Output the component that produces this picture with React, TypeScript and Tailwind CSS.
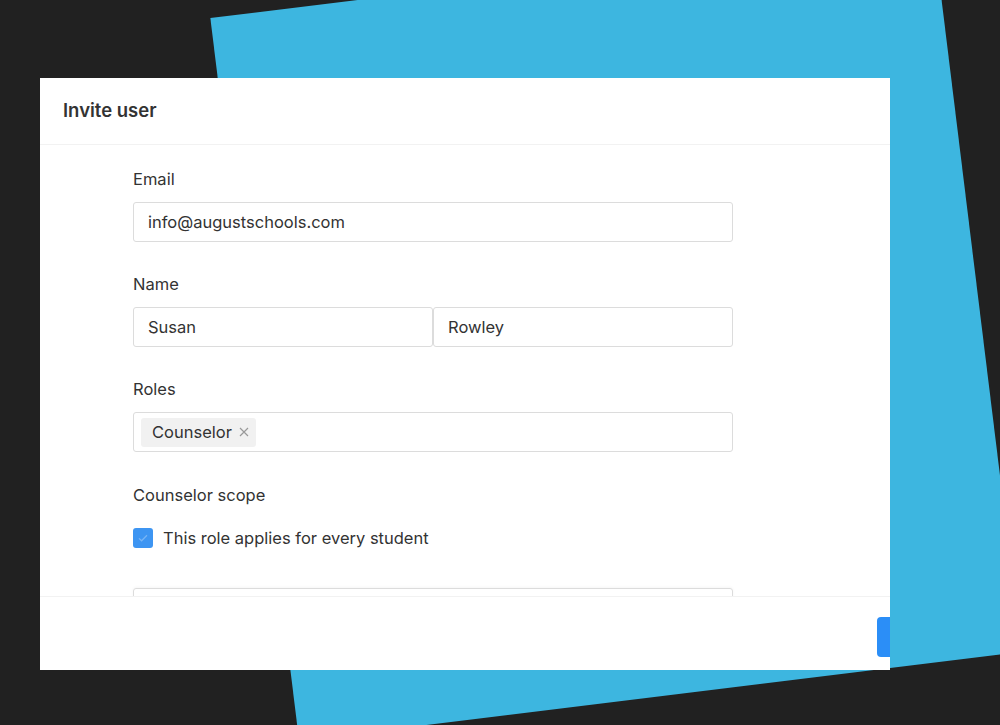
import React from 'react';

const font = { fontFamily: 'Inter, "Liberation Sans", sans-serif' };

const Label = ({ children }: { children: React.ReactNode }) => (
  <div className="h-6 text-[16.5px] leading-6 text-[#333]">{children}</div>
);

const TextBox = ({ value }: { value: string }) => (
  <div className="flex h-10 items-center rounded-[3px] border border-[#dcdcdc] px-[14px] text-[16.5px] text-[#333]">
    {value}
  </div>
);

const App = () => {
  return (
    <div className="relative h-[725px] w-[1000px] overflow-hidden bg-[#212121]" style={font}>
      {/* tilted blue card behind the dialog */}
      <div className="absolute left-[252px] top-[-29px] h-[728px] w-[728px] rotate-[-7deg] bg-[#3db6e0]" />

      <div className="relative pl-[40px] pt-[78px]">
        <div className="h-[592px] w-[850px] overflow-hidden bg-white">
          <div className="flex h-full w-[961px] flex-col">
            <div className="flex h-[67px] shrink-0 items-center border-b border-[#f2f2f2] px-[23px]">
              <h1 className="text-[18.5px] font-semibold text-[#333]">Invite user</h1>
            </div>

            <div className="flex-1 overflow-hidden pl-[93px] pt-[22px]">
              <div className="w-[600px]">
                <Label>Email</Label>
                <div className="mt-[11px]">
                  <TextBox value="info@augustschools.com" />
                </div>

                <div className="mt-[30px]">
                  <Label>Name</Label>
                  <div className="mt-[11px] grid grid-cols-2">
                    <TextBox value="Susan" />
                    <TextBox value="Rowley" />
                  </div>
                </div>

                <div className="mt-[30px]">
                  <Label>Roles</Label>
                  <div className="mt-[11px] flex h-10 items-center rounded-[3px] border border-[#dcdcdc] px-[7px]">
                    <span className="flex h-[29px] items-center gap-[7px] rounded-[3px] bg-[#f1f1f1] pl-[11px] pr-[7px] text-[16.5px] text-[#333]">
                      Counselor
                      <svg viewBox="0 0 10 10" className="h-[10px] w-[10px]">
                        <path d="M1 1l8 8M9 1l-8 8" stroke="#999" strokeWidth="1.2" fill="none" />
                      </svg>
                    </span>
                  </div>
                </div>

                <div className="mt-[31px]">
                  <Label>Counselor scope</Label>
                  <label className="mt-[19px] flex h-6 items-center gap-[10px] text-[16.5px] text-[#333]">
                    <span className="flex h-5 w-5 items-center justify-center rounded-[3px] bg-[#3d95f2]">
                      <svg viewBox="0 0 20 20" className="h-4 w-4">
                        <path d="M5 10.5l3.2 3L15 6.5" fill="none" stroke="#ffffff" strokeOpacity="0.3" strokeWidth="1.6" />
                      </svg>
                    </span>
                    This role applies for every student
                  </label>
                </div>

                <div className="mt-[38px] h-10 rounded-[3px] border border-[#dcdcdc] shadow-[0_-1px_3px_rgba(0,0,0,0.04)]" />
              </div>
            </div>

            <div className="flex h-[74px] shrink-0 items-start justify-end border-t border-[#f2f2f2] pr-6 pt-5">
              <button aria-label="Invite" className="h-10 w-[100px] rounded-[4px] bg-[#2b8ef7]" />
            </div>
          </div>
        </div>
      </div>
    </div>
  );
};

export default App;
